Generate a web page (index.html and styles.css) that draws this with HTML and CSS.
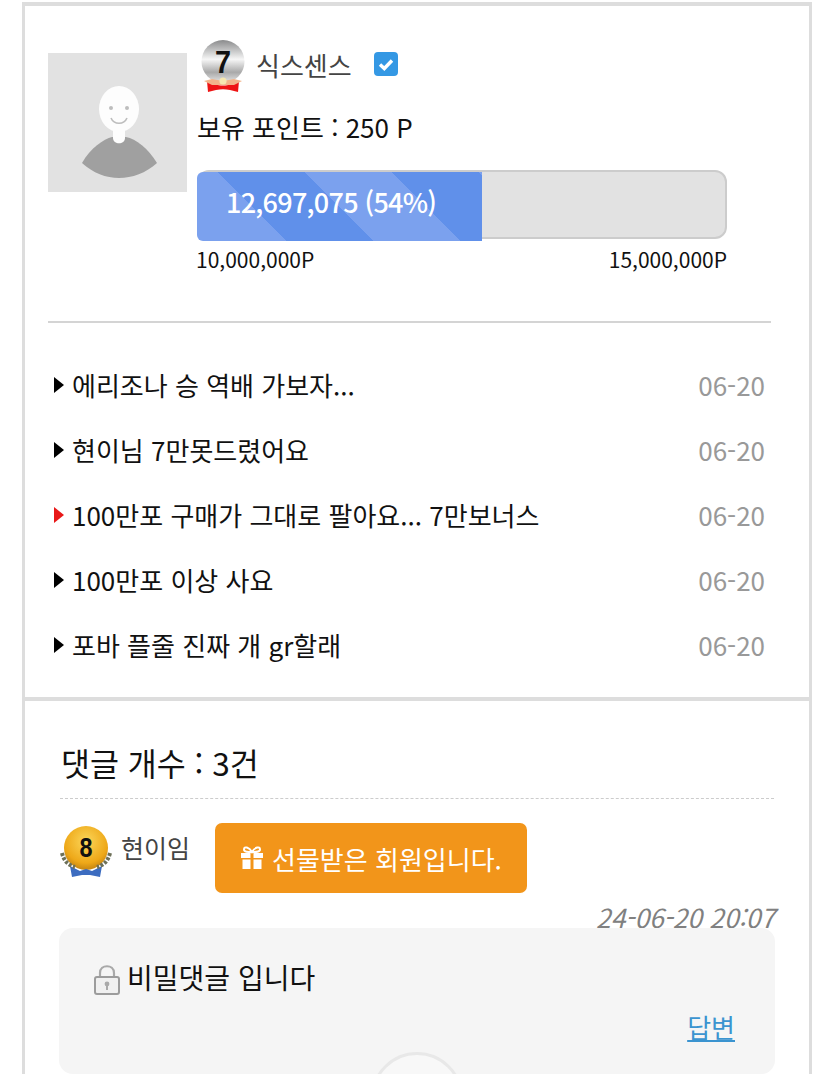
FILE: index.html
```html
<!DOCTYPE html>
<html lang="ko">
<head>
    <meta charset="UTF-8">
    <meta name="viewport" content="width=device-width, initial-scale=1.0">
    <title>회원 정보</title>
    <link rel="stylesheet" href="styles.css">
</head>
<body>
<div class="wrap">
    <section class="profile-box">
        <div class="profile">
            <svg class="avatar" viewBox="0 0 139 139">
                <rect width="139" height="139" fill="#e2e2e2"/>
                <path d="M34 110C42 95 56 86 64 84L78 84C88 86 100 95 109 110C98 120 84 125 71 125C58 125 45 120 34 110Z" fill="#a0a0a0"/>
                <path d="M65 70H77V85C77 92 65 92 65 85Z" fill="#fdfdfd"/>
                <ellipse cx="71" cy="56" rx="20" ry="23" fill="#fdfdfd"/>
                <circle cx="63" cy="55" r="2" fill="#bdbdbd"/>
                <circle cx="79" cy="55" r="2" fill="#bdbdbd"/>
                <path d="M63 65C66 72 76 72 79 65" fill="none" stroke="#bdbdbd" stroke-width="1.6"/>
            </svg>
            <div class="info">
                <div class="name-row">
                    <svg class="medal" viewBox="0 0 44 52">
                        <defs>
                            <linearGradient id="silver" x1="0" y1="0" x2="0" y2="1">
                                <stop offset="0" stop-color="#8a8b8c"/>
                                <stop offset="0.45" stop-color="#f6f6f6"/>
                                <stop offset="0.75" stop-color="#a9a9a9"/>
                                <stop offset="1" stop-color="#e8e8e8"/>
                            </linearGradient>
                        </defs>
                        <circle cx="22" cy="21.500" r="21.500" fill="url(#silver)"/>
                        <text x="22" y="33" text-anchor="middle" class="medal-num" textLength="16" lengthAdjust="spacingAndGlyphs">7</text>
                        <path d="M6 41L14 44C19 46 25 46 30 44L38 41L37 52L29 50C24 49 20 49 15 50L7 52Z" fill="#ee1414"/>
                        <path d="M3 41L11 39L22 41L33 39L41 41L33 45H11Z" fill="#f2b48a"/>
                        <circle cx="22" cy="41" r="3.600" fill="#f6e7b0"/>
                    </svg>
                    <span class="nick">식스센스</span>
                    <svg class="check" viewBox="0 0 24 24">
                        <rect width="24" height="24" rx="4" fill="#3498e4"/>
                        <path d="M6 12.500L10.300 16.500L18 8.500" fill="none" stroke="#fff" stroke-width="3.400"/>
                    </svg>
                </div>
                <p class="points">보유 포인트 : 250 P</p>
                <div class="bar">
                    <div class="bar-fill">12,697,075 (54%)</div>
                </div>
                <div class="bar-labels">
                    <span>10,000,000P</span>
                    <span>15,000,000P</span>
                </div>
            </div>
        </div>
        <ul class="posts">
            <li><span class="arrow"></span><span class="title">에리조나 승 역배 가보자...</span><span class="date">06-20</span></li>
            <li><span class="arrow"></span><span class="title">현이님 7만못드렸어요</span><span class="date">06-20</span></li>
            <li><span class="arrow red"></span><span class="title">100만포 구매가 그대로 팔아요... 7만보너스</span><span class="date">06-20</span></li>
            <li><span class="arrow"></span><span class="title">100만포 이상 사요</span><span class="date">06-20</span></li>
            <li><span class="arrow"></span><span class="title">포바 플줄 진짜 개 gr할래</span><span class="date">06-20</span></li>
        </ul>
    </section>
    <section class="comments">
        <h3 class="comment-count">댓글 개수 : 3건</h3>
        <div class="comment-head">
            <svg class="medal-gold" viewBox="0 0 52 54">
                <defs>
                    <radialGradient id="gold" cx="0.5" cy="0.35" r="0.7">
                        <stop offset="0" stop-color="#fbd65a"/>
                        <stop offset="0.7" stop-color="#eea818"/>
                        <stop offset="1" stop-color="#b87a10"/>
                    </radialGradient>
                </defs>
                <circle cx="26" cy="23" r="22" fill="url(#gold)"/>
                <path d="M10 41L20 46L26 44L32 46L42 41L40 52L30 50H22L12 52Z" fill="#3c6cc0"/>
                <text x="26" y="32" text-anchor="middle" class="medal-num gold-num" textLength="13" lengthAdjust="spacingAndGlyphs">8</text>
                <path d="M2 28C4 36 8 40 15 42M50 28C48 36 44 40 37 42" fill="none" stroke="#6d7058" stroke-width="4" stroke-dasharray="3 1.500"/>
            </svg>
            <span class="writer">현이임</span>
            <a class="gift-btn">
                <svg class="gift" viewBox="0 0 24 24">
                    <path d="M1 7H10.500V12H1ZM13.500 7H23V12H13.500ZM2.500 13.500H10.500V23H2.500ZM13.500 13.500H21.500V23H13.500Z" fill="#fff"/>
                    <path d="M12 6C9 1 4 0 4 3.500C4 6 8 6 12 6C16 6 20 6 20 3.500C20 0 15 1 12 6Z" fill="none" stroke="#fff" stroke-width="2"/>
                </svg>
                선물받은 회원입니다.
            </a>
        </div>
        <div class="comment-date">24-06-20 20:07</div>
        <div class="comment-body">
            <div class="secret">
                <svg class="lock" viewBox="0 0 26 30">
                    <path d="M6 13V8C6 -1 20 -1 20 8V13" fill="none" stroke="#a9a9a9" stroke-width="2.200"/>
                    <rect x="1" y="12" width="24" height="17" rx="2" fill="#f0f0f0" stroke="#9c9c9c" stroke-width="2"/>
                    <circle cx="13" cy="19" r="2.400" fill="#a9a9a9"/>
                    <rect x="12" y="20" width="2" height="5" fill="#a9a9a9"/>
                </svg>
                비밀댓글 입니다
            </div>
            <a class="reply">답변</a>
            <div class="circle"></div>
        </div>
    </section>
</div>
</body>
</html>
```

FILE: styles.css
```css
html, body {
    margin: 0;
    height: 1074px;
    overflow: hidden;
}
body {
    font-family: "Noto Sans CJK KR", "Noto Sans", sans-serif;
    background-color: #fff;
    color: #111;
}
.wrap {
    margin: 2px 23px 0 22px;
    height: 1072px;
    box-sizing: border-box;
    overflow: hidden;
    border-left: 3px solid #ddd;
    border-right: 3px solid #ddd;
    border-top: 4px solid #ddd;
}
.profile-box {
    padding: 33px 38px 0 23px;
    height: 658px;
    border-bottom: 4px solid #ddd;
}
.profile {
    display: flex;
    align-items: flex-start;
    gap: 10px;
    height: 282px;
    border-bottom: 2px solid #d4d4d4;
}
.avatar {
    width: 139px;
    height: 139px;
    margin-top: 14px;
    flex: none;
}
.info {
    width: 530px;
}
.name-row {
    display: flex;
    align-items: center;
    height: 50px;
}
.medal {
    align-self: flex-start;
    width: 44px;
    height: 52px;
    margin: 1px 0 0 4px;
    flex: none;
}
.medal-num {
    font-family: "Liberation Sans", sans-serif;
    font-size: 31px;
    font-weight: bold;
    fill: #111;
}
.gold-num {
    font-size: 28px;
}
.nick {
    margin-left: 11px;
    font-size: 26px;
    color: #444;
}
.check {
    width: 24px;
    height: 24px;
    margin-left: 22px;
}
.points {
    margin: 0;
    margin-top: 20px;
    font-size: 26px;
    line-height: 36px;
}
.bar {
    position: relative;
    margin-top: 25px;
    height: 65px;
    background-color: #e2e2e2;
    border: 2px solid #ccc;
    border-radius: 12px;
}
.bar-fill {
    position: absolute;
    left: -2px;
    top: 0;
    width: 285px;
    height: 69px;
    padding-left: 29px;
    box-sizing: border-box;
    border-radius: 6px 0 0 6px;
    background-color: #6090ea;
    background-image: linear-gradient(45deg, #7ba1ee 25%, transparent 25%, transparent 50%, #7ba1ee 50%, #7ba1ee 75%, transparent 75%);
    background-size: 174px 174px;
    background-position: -66px 0;
    color: #fff;
    font-size: 27px;
    font-weight: 500;
    line-height: 60px;
    letter-spacing: -0.75px;
}
.bar-labels {
    display: flex;
    justify-content: space-between;
    margin: 5px 0 0 -1px;
    font-size: 21px;
    line-height: 30px;
}
.posts {
    list-style: none;
    margin: 0;
    padding: 29px 6px 0 6px;
}
.posts li {
    display: flex;
    align-items: center;
    height: 65px;
    font-size: 26px;
}
.arrow {
    width: 0;
    height: 0;
    margin-right: 8px;
    border-left: 10px solid #000;
    border-top: 8px solid transparent;
    border-bottom: 8px solid transparent;
}
.arrow.red {
    border-left-color: #e81818;
}
.title {
    flex: 1;
}
.date {
    color: #999;
}
.comments {
    padding: 0 35px;
}
.comment-count {
    margin: 0;
    padding: 36px 0 11px 1px;
    font-size: 31.5px;
    font-weight: 400;
    line-height: 50px;
    border-bottom: 1px dashed #ccc;
}
.comment-head {
    display: flex;
    align-items: flex-start;
    margin-top: 24px;
}
.medal-gold {
    width: 52px;
    height: 54px;
    margin-top: 2px;
    flex: none;
}
.writer {
    margin: 4px 0 0 9px;
    font-size: 25px;
    line-height: 40px;
    color: #444;
}
.gift-btn {
    display: flex;
    align-items: center;
    gap: 8px;
    height: 70px;
    margin-left: 25px;
    padding: 0 25px;
    box-sizing: border-box;
    background-color: #f2951a;
    border-radius: 7px;
    color: #fff;
    font-size: 26px;
}
.gift {
    width: 24px;
    height: 24px;
}
.comment-date {
    margin: 6px -1px 0 0;
    height: 29px;
    text-align: right;
    font-size: 26.3px;
    font-style: italic;
    line-height: 36px;
    color: #808080;
}
.comment-body {
    position: relative;
    height: 146px;
    box-sizing: border-box;
    background-color: #f5f5f5;
    border-radius: 14px;
    padding: 28px 40px 0 35px;
    overflow: hidden;
    margin: 0 -1px;
}
.secret {
    display: flex;
    align-items: center;
    gap: 7px;
    font-size: 28px;
    line-height: 42px;
}
.lock {
    width: 26px;
    height: 30px;
    margin-top: 6px;
}
.reply {
    display: block;
    margin-top: 10px;
    text-align: right;
    font-size: 26px;
    color: #3b94d0;
    text-decoration: underline;
}
.circle {
    position: absolute;
    left: 312px;
    top: 124px;
    width: 86px;
    height: 86px;
    border: 3px solid #e8e8e8;
    border-radius: 50%;
    background-color: #f8f8f8;
}
```
